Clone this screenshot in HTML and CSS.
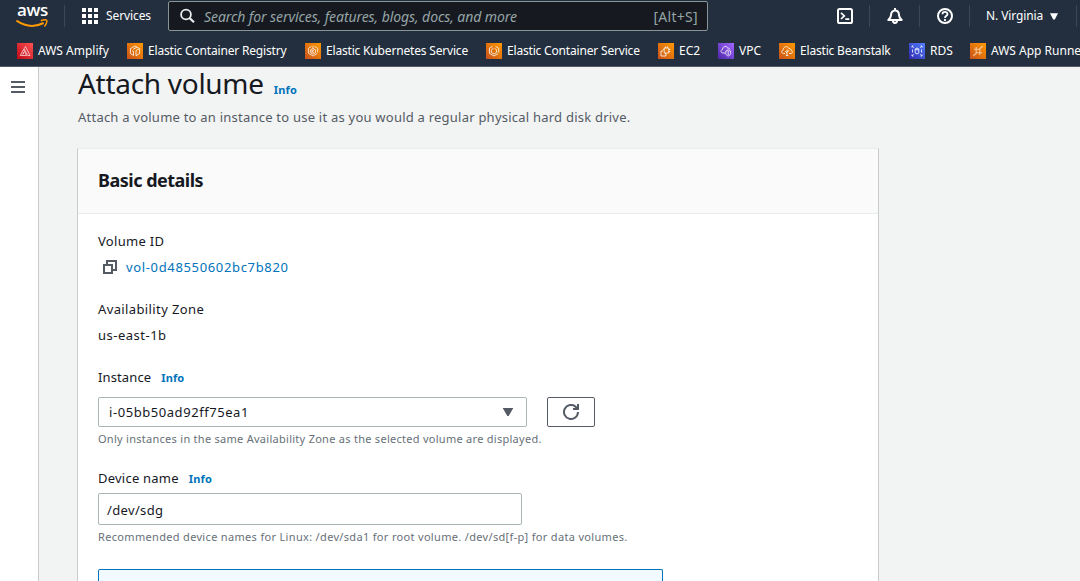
FILE: index.html
```
<!DOCTYPE html>
<html lang="en">
<head>
<meta charset="utf-8">
<title>Attach volume</title>
<link rel="stylesheet" href="styles.css">
</head>
<body>
<svg width="0" height="0" class="defs">
  <defs>
    <linearGradient id="g-red" x1="0" y1="1" x2="1" y2="0"><stop offset="0" stop-color="#bd0816"/><stop offset="1" stop-color="#ff5252"/></linearGradient>
    <linearGradient id="g-orange" x1="0" y1="1" x2="1" y2="0"><stop offset="0" stop-color="#c8511b"/><stop offset="1" stop-color="#f90"/></linearGradient>
    <linearGradient id="g-purple" x1="0" y1="1" x2="1" y2="0"><stop offset="0" stop-color="#4d27a8"/><stop offset="1" stop-color="#a166ff"/></linearGradient>
    <linearGradient id="g-blue" x1="0" y1="1" x2="1" y2="0"><stop offset="0" stop-color="#2e27ad"/><stop offset="1" stop-color="#527fff"/></linearGradient>
  </defs>
</svg>
<header class="nav">
  <div class="nav-top">
    <div class="logo">
      <span class="logo-text">aws</span>
      <svg class="smile" width="32" height="9" viewBox="0 0 32 9"><path d="M.4 1.600Q14 10.800 27.600 4" fill="none" stroke="#f90" stroke-width="2"/><path d="M24.800 1.700C28 .6 30.200.7 30.700 1.400c.5.8-.3 3.900-2.300 6" fill="none" stroke="#f90" stroke-width="1.500"/></svg>
    </div>
    <i class="sep sep-logo"></i>
    <div class="services">
      <svg width="16" height="16" viewBox="0 0 16 16" fill="#fff"><path d="M0 0h4v4H0zM6 0h4v4H6zM12 0h4v4h-4zM0 6h4v4H0zM6 6h4v4H6zM12 6h4v4h-4zM0 12h4v4H0zM6 12h4v4H6zM12 12h4v4h-4z"/></svg>
      <span>Services</span>
    </div>
    <div class="search">
      <svg width="16" height="16" viewBox="0 0 16 16" fill="none" stroke="#eaeded" stroke-width="1.8"><circle cx="6" cy="6.500" r="4.900"/><path d="m9.500 10 4.500 4.300" stroke-width="2.200"/></svg>
      <em>Search for services, features, blogs, docs, and more</em>
      <kbd>[Alt+S]</kbd>
    </div>
    <div class="tools">
      <div class="tool"><svg width="16" height="16" viewBox="0 0 16 16" fill="none" stroke="#fff" stroke-width="2"><rect x="1" y="1" width="14" height="14" rx="1.6"/><path d="m4 4.800 3.300 3.100L4 11M8.300 11.200h4" stroke-width="1.7"/></svg></div>
      <div class="tool"><svg width="16" height="16" viewBox="0 0 16 16" fill="none" stroke="#fff" stroke-width="2" stroke-linejoin="round"><path d="M8 0v2.500M4 7.200C4 4.600 5.500 2.600 8 2.600s4 2 4 4.600c0 2 .9 3 2.700 4.700H1.300C3.100 10.200 4 9.200 4 7.200z"/><path d="M5.900 12c0 3.900 4.200 3.900 4.200 0"/></svg></div>
      <div class="tool"><svg width="16" height="16" viewBox="0 0 16 16" fill="none" stroke="#fff" stroke-width="2"><circle cx="8" cy="8" r="7"/><path d="M5.500 6.300C5.500 3.200 10.500 3.200 10.500 6.200 10.500 7.900 8 7.700 8 9.900M8 11v2" stroke-width="1.8"/></svg></div>
      <div class="region"><span>N. Virginia</span><svg width="8" height="7" viewBox="0 0 8 7"><path d="M0 .3h8L4.800 6.500H3.200z" fill="#fff"/></svg></div>
      <i class="sep"></i>
    </div>
  </div>
  <nav class="favs">
    <a class="fav f1"><svg class="ic" viewBox="0 0 16 16"><path fill="url(#g-red)" d="M0 0h16v16H0z"/><path d="m8.500 3.500 4.500 9h-2.300L7.200 5.700zM6.500 6.500l3 6H3.300zM6.500 9v2H5.300" fill="none" stroke="#fff" stroke-width=".65"/></svg><span>AWS Amplify</span></a>
    <a class="fav f2"><svg class="ic" viewBox="0 0 16 16"><path fill="url(#g-orange)" d="M0 0h16v16H0z"/><path d="M6.500 12.500 3.400 10.500V5.600L8 3l4.600 2.600v4.900L9 12.700V7.500l3-1.700M6.500 12.500V8.500L5 7.700M9.800 4.200 6.300 6.200" fill="none" stroke="#fff" stroke-width=".8"/></svg><span>Elastic Container Registry</span></a>
    <a class="fav f3"><svg class="ic" viewBox="0 0 16 16"><path fill="url(#g-orange)" d="M0 0h16v16H0z"/><g fill="none" stroke="#fff" stroke-width=".75"><path d="M6.500 3.300 3.400 5.300v5L8 13l4-2.300M9.500 3.300l3.200 2v4.300M8 2.800v2.700"/><path d="m8 5.500 2.600 1.400v2.800L8 11.100 5.400 9.700V6.900z"/><path d="M7 6.700v3.200M9.200 6.800 7.200 8.300l2 1.500"/></g></svg><span>Elastic Kubernetes Service</span></a>
    <a class="fav f4"><svg class="ic" viewBox="0 0 16 16"><path fill="url(#g-orange)" d="M0 0h16v16H0z"/><g fill="none" stroke="#fff" stroke-width=".8"><path d="M6.500 3.300 3.400 5.300v5L8 13l4-2.300M9.500 3.300l3.200 2v4.300"/><path d="M7.500 5.300 5.300 6.800v2.700L8 11l2.600-1.500V6.800L8.700 5.500"/></g></svg><span>Elastic Container Service</span></a>
    <a class="fav f5"><svg class="ic" viewBox="0 0 16 16"><path fill="url(#g-orange)" d="M0 0h16v16H0z"/><g fill="none" stroke="#fff" stroke-width=".8"><path d="M6.200 5h4.600v5H6.200zM7.500 3.500V5M9.500 3.500V5M10.800 6.500h1.500M10.800 8.500h1.500M7.500 10v1.300M4.800 6.500h1.400"/><path d="M5 8H3v5h5v-2"/></g></svg><span>EC2</span></a>
    <a class="fav f6"><svg class="ic" viewBox="0 0 16 16"><path fill="url(#g-purple)" d="M0 0h16v16H0z"/><g fill="none" stroke="#fff" stroke-width=".8"><path d="M7 10H5C2.500 10 2.500 6.800 4.600 6.500 4.300 3 9 2.300 9.700 5.300c1.200-.5 2 .1 2.100 1.200"/><path d="m10.200 7 2.400 1v2.500c0 1.100-1.100 2-2.400 2.500-1.300-.5-2.400-1.400-2.400-2.500V8zM10.200 8v4"/></g></svg><span>VPC</span></a>
    <a class="fav f7"><svg class="ic" viewBox="0 0 16 16"><path fill="url(#g-orange)" d="M0 0h16v16H0z"/><path d="M6 10.500H4.500C2.300 10.500 2.200 7.500 4.200 7 4 3.300 8.800 2.500 9.900 5.600c1.400-.3 2 .5 2.100 1.700 2 .5 1.700 3.200-.2 3.200H10M8 6.500v6M8 10 6 8.200M8 8.800l2.300-1.500M6.800 12.500h2.400" fill="none" stroke="#fff" stroke-width=".8"/></svg><span>Elastic Beanstalk</span></a>
    <a class="fav f8"><svg class="ic" viewBox="0 0 16 16"><path fill="url(#g-blue)" d="M0 0h16v16H0z"/><g fill="none" stroke="#fff" stroke-width=".8"><path d="M3 4.500V3h1.500M3.300 3.300 4.700 4.700M11.500 3H13v1.500M12.700 3.300l-1.400 1.400M3 11.500V13h1.500M3.300 12.700l1.400-1.400M11.500 13H13v-1.500M12.700 12.700l-1.400-1.400M3.500 6.500v3M12.500 6.500v3"/><ellipse cx="8" cy="6" rx="1.800" ry=".8"/><path d="M6.200 6v4c0 1 3.600 1 3.600 0V6"/></g></svg><span>RDS</span></a>
    <a class="fav f9"><svg class="ic" viewBox="0 0 16 16"><path fill="url(#g-orange)" d="M0 0h16v16H0z"/><g fill="none" stroke="#fff" stroke-opacity=".6" stroke-width="1.100"><path d="M6.200 4v6.200L3.300 13M9.800 12V5.800L12.700 3M4 6.200h5.800M12 9.800H6.200"/></g></svg><span>AWS App Runner</span></a>
  </nav>
</header>
<div class="page">
  <aside class="rail"><svg width="14" height="12" viewBox="0 0 14 12" fill="#545b64"><path d="M0 0h14v2H0zM0 5h14v2H0zM0 10h14v2H0z"/></svg></aside>
  <main class="main">
    <div class="title"><h1>Attach volume</h1><a class="info">Info</a></div>
    <p class="desc">Attach a volume to an instance to use it as you would a regular physical hard disk drive.</p>
    <section class="card">
      <h2>Basic details</h2>
      <div class="body">
        <div class="label l-vol">Volume ID</div>
        <div class="value copy"><svg width="14" height="14" viewBox="0 0 14 14" fill="none" stroke="#545b64" stroke-width="2"><path d="M1 5h8v8H1z"/><path d="M4 4V1h9v9h-3"/></svg><a class="vol">vol-0d48550602bc7b820</a></div>
        <div class="label l-az gap">Availability Zone</div>
        <div class="value v-az">us-east-1b</div>
        <div class="label gap"><span class="l-inst">Instance</span><a class="info">Info</a></div>
        <div class="controls">
          <div class="select"><span>i-05bb50ad92ff75ea1</span><svg width="10" height="8" viewBox="0 0 10 8"><path d="M0 0h10v.5L5.700 8H4.300L0 .5z" fill="#545b64"/></svg></div>
          <div class="refresh"><svg width="16" height="16" viewBox="0 0 16 16" fill="none" stroke="#545b64" stroke-width="2"><path d="M15 8a7 7 0 1 1-2.400-5.300L15 5"/><path d="M15 0v5h-5"/></svg></div>
        </div>
        <div class="hint h1t">Only instances in the same Availability Zone as the selected volume are displayed.</div>
        <div class="label dev"><span class="l-dev">Device name</span><a class="info">Info</a></div>
        <div class="input">/dev/sdg</div>
        <div class="hint h2t">Recommended device names for Linux: /dev/sda1 for root volume. /dev/sd[f-p] for data volumes.</div>
        <div class="alert"></div>
      </div>
    </section>
  </main>
</div>
</body>
</html>
```
FILE: styles.css
```
* { box-sizing: border-box; }
body { margin: 0; width: 1080px; height: 581px; overflow: hidden; background: #f2f3f3; color: #16191f; font: 13px/20px "Noto Sans", sans-serif; display: flex; flex-direction: column; }
svg { display: block; flex: none; }
.defs { position: absolute; }
h1, h2, p { margin: 0; }
.nav { height: 67px; flex: none; background: #232f3e; border-bottom: 1px solid #545b64; color: #fff; white-space: nowrap; overflow: hidden; }
.nav-top { display: flex; height: 32px; align-items: center; padding-left: 16px; }
.logo { width: 32px; height: 27px; display: flex; flex-direction: column; margin-top: -3px; }
.logo-text { font: 600 17px/18px "Open Sans", sans-serif; letter-spacing: -.4px; height: 18px; padding-left: 1px; }
.sep { width: 1px; height: 22px; background: #3d4754; flex: none; }
.sep-logo { margin: 0 17px 0 16px; }
.services { display: flex; gap: 8px; width: 86px; align-items: center; font-size: 12px; letter-spacing: -.1px; }
.search { width: 540px; height: 30px; border: 1px solid #879596; border-radius: 2px; background: #16191f; display: flex; align-items: center; padding: 0 9px 0 11px; color: #95a5a6; font-size: 14px; }
.search em { margin-left: 8px; flex: 1; padding-top: 2px; letter-spacing: -.075px; }
.search kbd { font: inherit; padding-top: 2px; letter-spacing: .3px; }
.tools { display: flex; align-items: center; margin-left: 112px; }
.tool { width: 50px; height: 22px; border-right: 1px solid #3d4754; display: flex; align-items: center; justify-content: center; }
.region { width: 106px; display: flex; align-items: center; gap: 7px; padding-left: 16px; font-size: 12px; letter-spacing: -.1px; }
.favs { display: flex; padding: 9px 0 0 17px; font-size: 12px; }
.fav { display: flex; align-items: center; gap: 5px; flex: none; }
.ic { width: 16px; height: 16px; }
.f1 { width: 110px; } .f2 { width: 178px; } .f3 { width: 181px; } .f4 { width: 172px; } .f5 { width: 60px; } .f6 { width: 61px; } .f7 { width: 130px; } .f8 { width: 61px; } .f9 { width: 93px; }
.f2, .f3, .f4, .f7 { letter-spacing: -.18px; }
.page { flex: 1; min-height: 0; display: flex; overflow: hidden; }
.rail { width: 39px; background: #fff; border-right: 1px solid #c8cccd; padding: 14px 0 0 11px; }
.main { padding-left: 38px; width: 840px; display: flex; flex-direction: column; min-height: 0; }
.title { flex: none; height: 40px; margin-top: -1px; display: flex; align-items: baseline; gap: 10px; padding-left: 1px; }
h1 { font-size: 28px; line-height: 35px; font-weight: 400; letter-spacing: -.29px; }
.info { font-size: 11px; font-weight: 700; color: #0073bb; line-height: 16px; letter-spacing: .15px; }
.desc { flex: none; margin-top: 1px; padding-left: 1px; color: #545b64; letter-spacing: .228px; white-space: nowrap; }
.card { margin-top: 21px; width: 802px; flex: 1; min-height: 0; overflow: hidden; background: #fff; border: 1px solid #c8cccd; border-top-color: #eaeded; border-bottom: 0; }
h2 { height: 65px; padding: 0 20px; font-size: 18px; line-height: 63px; font-weight: 700; letter-spacing: -.5px; background: #fafafa; border-bottom: 1px solid #eaeded; }
.body { padding: 17px 20px 0; }
.label, .value { height: 20px; display: flex; align-items: baseline; }
.value { margin-top: 6px; }
.gap { margin-top: 22px; }
.label .info { margin-left: 10px; }
.l-vol { letter-spacing: .3px; }
.l-az { letter-spacing: .38px; }
.v-az { letter-spacing: .5px; }
.l-inst { letter-spacing: .12px; }
.l-dev { letter-spacing: .23px; }
.copy { align-items: center; padding-left: 5px; gap: 9px; }
.vol { color: #0073bb; letter-spacing: .65px; }
.controls { display: flex; gap: 20px; margin-top: 10px; height: 30px; }
.select { width: 429px; border: 1px solid #aab7b8; border-radius: 2px; display: flex; align-items: center; justify-content: space-between; padding: 0 13px 0 10px; letter-spacing: .56px; }
.refresh { width: 48px; border: 1px solid #545b64; border-radius: 2px; display: flex; align-items: center; justify-content: center; }
.hint { color: #687078; font-size: 11px; line-height: 16px; margin-top: 4px; white-space: nowrap; }
.h1t { letter-spacing: .275px; }
.h2t { letter-spacing: .325px; }
.dev { margin-top: 21px; }
.input { margin-top: 5px; width: 424px; height: 32px; border: 1px solid #aab7b8; border-radius: 2px; padding: 6px 8px; line-height: 20px; letter-spacing: .35px; }
.alert { margin-top: 24px; width: 565px; height: 12px; background: #f1faff; border: 1px solid #0073bb; border-bottom: 0; border-radius: 2px 2px 0 0; }
```
